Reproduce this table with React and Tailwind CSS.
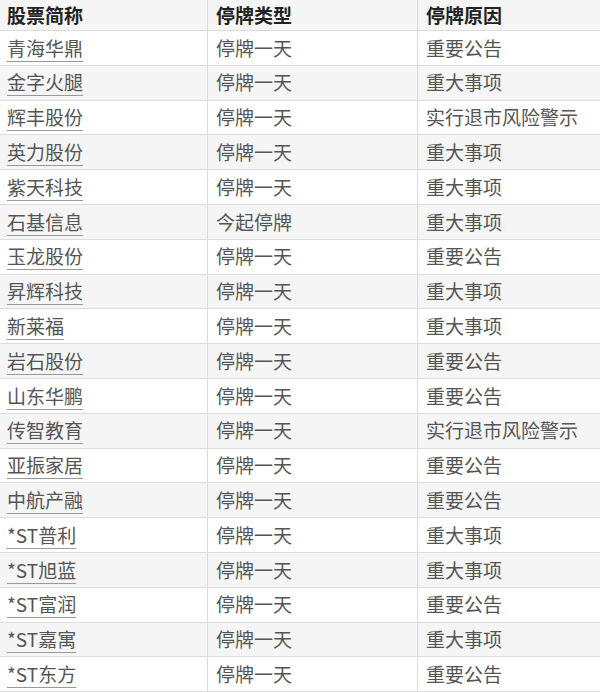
import React from "react";

const rows = [
  ["青海华鼎", "停牌一天", "重要公告"],
  ["金字火腿", "停牌一天", "重大事项"],
  ["辉丰股份", "停牌一天", "实行退市风险警示"],
  ["英力股份", "停牌一天", "重大事项"],
  ["紫天科技", "停牌一天", "重大事项"],
  ["石基信息", "今起停牌", "重大事项"],
  ["玉龙股份", "停牌一天", "重要公告"],
  ["昇辉科技", "停牌一天", "重大事项"],
  ["新莱福", "停牌一天", "重大事项"],
  ["岩石股份", "停牌一天", "重要公告"],
  ["山东华鹏", "停牌一天", "重要公告"],
  ["传智教育", "停牌一天", "实行退市风险警示"],
  ["亚振家居", "停牌一天", "重要公告"],
  ["中航产融", "停牌一天", "重要公告"],
  ["*ST普利", "停牌一天", "重大事项"],
  ["*ST旭蓝", "停牌一天", "重大事项"],
  ["*ST富润", "停牌一天", "重要公告"],
  ["*ST嘉寓", "停牌一天", "重大事项"],
  ["*ST东方", "停牌一天", "重要公告"],
];

export default function App() {
  return (
    <div
      className="w-[600px] h-[692px] overflow-hidden bg-white text-[19px]"
      style={{ fontFamily: '"Noto Sans CJK SC", "Noto Sans", sans-serif' }}
    >
      <div className="grid grid-cols-[208px_210px_182px] h-[31px] bg-[#f5f5f5] border-b border-[#dcdcdc] font-bold text-[#222]">
        <div className="flex items-center pl-[7px] border-r border-[#dcdcdc]">股票简称</div>
        <div className="flex items-center pl-[8px] border-r border-[#dcdcdc]">停牌类型</div>
        <div className="flex items-center pl-[8px]">停牌原因</div>
      </div>
      {rows.map((r, i) => (
        <div
          key={i}
          className={
            "grid grid-cols-[208px_210px_182px] h-[34.8px] border-b border-[#dcdcdc] text-[#555] " +
            (i % 2 === 0 ? "bg-white" : "bg-[#f5f5f5]")
          }
        >
          <div className="flex items-center pl-[7px] border-r border-[#dcdcdc]">
            <span className="underline decoration-[#999] underline-offset-[5px] decoration-1">{r[0]}</span>
          </div>
          <div className="flex items-center pl-[8px] border-r border-[#dcdcdc]">{r[1]}</div>
          <div className="flex items-center pl-[8px]">{r[2]}</div>
        </div>
      ))}
    </div>
  );
}
